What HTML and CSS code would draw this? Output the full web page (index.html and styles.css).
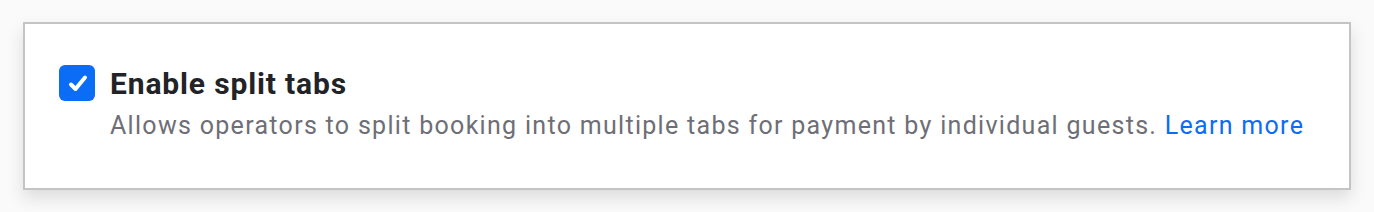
FILE: index.html
```html
<!DOCTYPE html>
<html lang="en">
<head>
    <meta charset="UTF-8">
    <meta name="viewport" content="width=device-width, initial-scale=1.0">
    <title>Split tabs setting</title>
    <link rel="stylesheet" href="styles.css">
</head>
<body>
    <div class="page">
        <div class="setting-card">
            <label class="setting-row">
                <span class="checkbox">
                    <svg width="36" height="36" viewBox="0 0 36 36">
                        <path d="M12 19.5 L16.5 24 L26 12.5" fill="none" stroke="#fff" stroke-width="4" stroke-linecap="round" stroke-linejoin="round"/>
                    </svg>
                </span>
                <span class="setting-text">
                    <span class="setting-title">Enable split tabs</span>
                    <span class="setting-desc">Allows operators to split booking into multiple tabs for payment by individual guests. <a href="#" class="learn-more">Learn more</a></span>
                </span>
            </label>
        </div>
    </div>
</body>
</html>
```

FILE: styles.css
```css
* {
    margin: 0;
    padding: 0;
    box-sizing: border-box;
}

body {
    font-family: Roboto, 'Liberation Sans', Arial, sans-serif;
    background: #fafafa;
    color: #222;
}

.page {
    padding: 22px 23px;
}

.setting-card {
    background: #fff;
    border: 2px solid #c4c4c4;
    box-shadow: 0 8px 16px rgba(0, 0, 0, 0.12);
    padding: 41px 34px 46px;
}

.setting-row {
    display: flex;
    align-items: flex-start;
    gap: 15px;
}

.checkbox {
    flex: none;
    width: 36px;
    height: 36px;
    border-radius: 6px;
    background: #0b6cf5;
    display: flex;
}

.setting-text {
    display: flex;
    flex-direction: column;
}

.setting-title {
    font-size: 30px;
    font-weight: 700;
    line-height: 38px;
    letter-spacing: 0.85px;
    color: #222326;
}

.setting-desc {
    margin-top: 7px;
    font-size: 25px;
    line-height: 32px;
    letter-spacing: 1.3px;
    color: #6e6e76;
}

.learn-more {
    color: #0b6cf5;
    text-decoration: none;
}
```
